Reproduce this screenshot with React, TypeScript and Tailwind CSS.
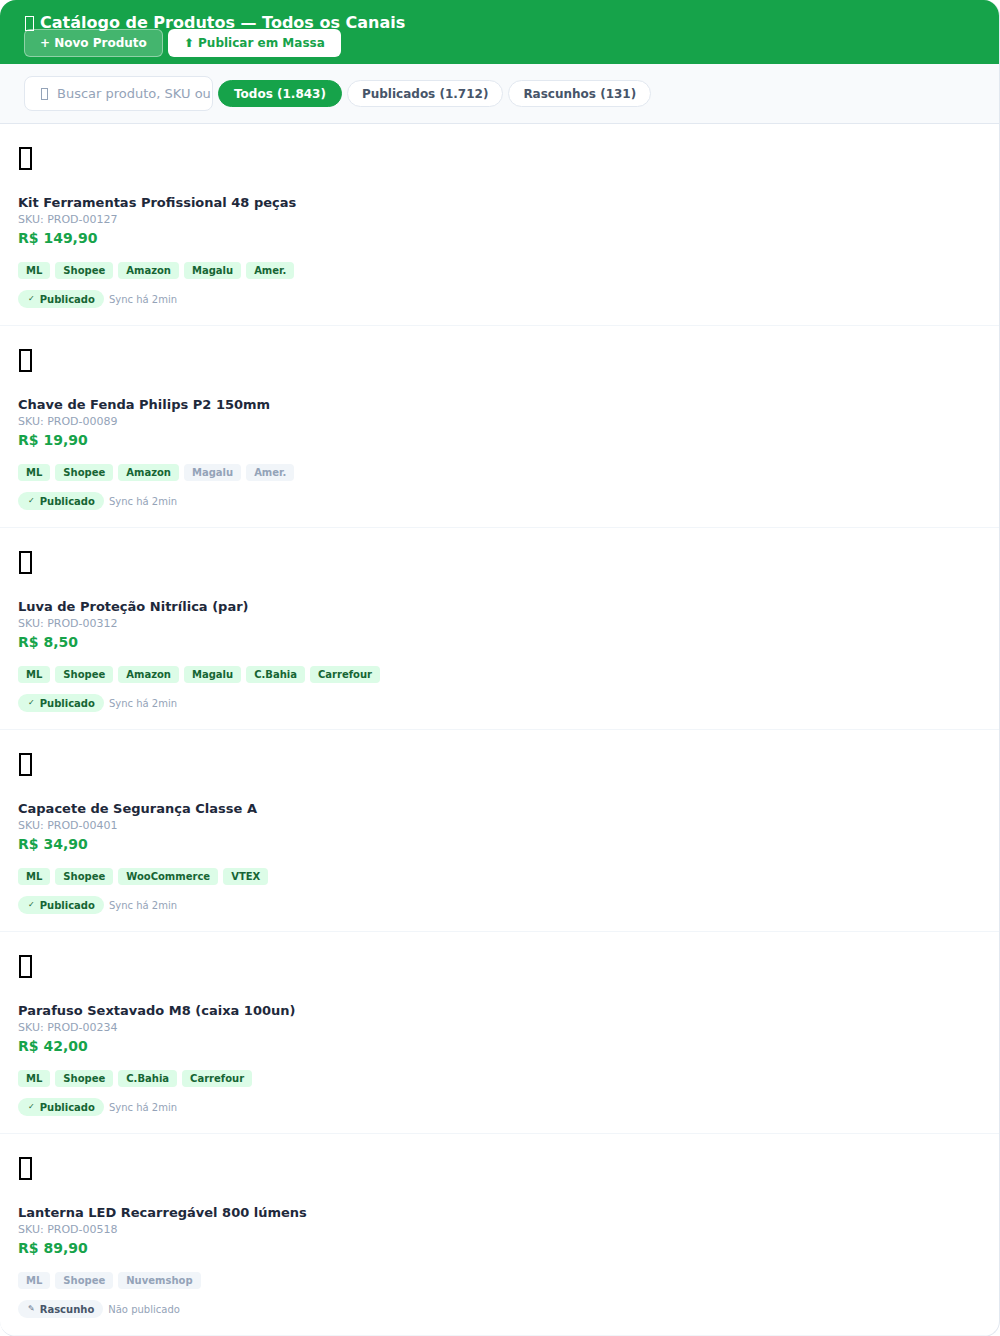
import React from 'react';

type Channel = { name: string; on: boolean };

interface Product {
  emoji: string;
  name: string;
  sku: string;
  price: string;
  channels: Channel[];
  draft?: boolean;
}

const ch = (names: string[], off: string[] = []): Channel[] =>
  names.map((name) => ({ name, on: !off.includes(name) }));

const PRODUCTS: Product[] = [
  { emoji: '🧰', name: 'Kit Ferramentas Profissional 48 peças', sku: 'PROD-00127', price: 'R$ 149,90', channels: ch(['ML', 'Shopee', 'Amazon', 'Magalu', 'Amer.']) },
  { emoji: '🪛', name: 'Chave de Fenda Philips P2 150mm', sku: 'PROD-00089', price: 'R$ 19,90', channels: ch(['ML', 'Shopee', 'Amazon', 'Magalu', 'Amer.'], ['Magalu', 'Amer.']) },
  { emoji: '🧤', name: 'Luva de Proteção Nitrílica (par)', sku: 'PROD-00312', price: 'R$ 8,50', channels: ch(['ML', 'Shopee', 'Amazon', 'Magalu', 'C.Bahia', 'Carrefour']) },
  { emoji: '⛑️', name: 'Capacete de Segurança Classe A', sku: 'PROD-00401', price: 'R$ 34,90', channels: ch(['ML', 'Shopee', 'WooCommerce', 'VTEX']) },
  { emoji: '🔩', name: 'Parafuso Sextavado M8 (caixa 100un)', sku: 'PROD-00234', price: 'R$ 42,00', channels: ch(['ML', 'Shopee', 'C.Bahia', 'Carrefour']) },
  { emoji: '🔦', name: 'Lanterna LED Recarregável 800 lúmens', sku: 'PROD-00518', price: 'R$ 89,90', channels: ch(['ML', 'Shopee', 'Nuvemshop'], ['ML', 'Shopee', 'Nuvemshop']), draft: true },
];

// the emoji show up as empty "missing glyph" boxes in the reference
const GlyphBox: React.FC<{ label: string; className: string }> = ({ label, className }) => (
  <span role="img" aria-label={label} className={`inline-block shrink-0 ${className}`} />
);

const ProductRow: React.FC<{ p: Product }> = ({ p }) => (
  <div className="px-[18px] pt-[18px] pb-[17px] border-b border-[#f1f5f9]">
    <div className="h-[36px] mb-[16px] pt-[5px]">
      <GlyphBox label={p.emoji} className="w-[13px] h-[23px] border-2 border-black ml-[1px]" />
    </div>
    <div className="text-[13px] leading-[18px] font-bold text-[#1e293b]">{p.name}</div>
    <div className="text-[11px] leading-[16px] text-[#94a3b8]">SKU: {p.sku}</div>
    <div className="text-[14px] leading-[20px] font-bold text-[#16a34a]">{p.price}</div>

    {/* channel tags */}
    <div className="flex gap-[5px] mt-[14px]">
      {p.channels.map((c) => (
        <span
          key={c.name}
          className={`h-[17px] px-2 rounded flex items-center text-[10px] font-bold ${
            c.on ? 'bg-[#dcfce7] text-[#166534]' : 'bg-[#f1f5f9] text-[#94a3b8]'
          }`}
        >
          {c.name}
        </span>
      ))}
    </div>

    {/* status */}
    <div className="flex items-center gap-[5px] mt-[11px]">
      {p.draft ? (
        <span className="h-[18px] pl-[10px] pr-[9px] rounded-full bg-[#f1f5f9] text-[#475569] text-[10px] font-bold flex items-center gap-[5px]">
          <span className="text-[8px] text-[#64748b]">✎</span>Rascunho
        </span>
      ) : (
        <span className="h-[18px] pl-[10px] pr-[9px] rounded-full bg-[#dcfce7] text-[#166534] text-[10px] font-bold flex items-center gap-[5px]">
          <span className="text-[8px]">✓</span>Publicado
        </span>
      )}
      <span className="text-[10px] text-[#94a3b8]">{p.draft ? 'Não publicado' : 'Sync há 2min'}</span>
    </div>
  </div>
);

const App: React.FC = () => {
  return (
    <div className="bg-white font-['DejaVu_Sans',sans-serif]">
      <div className="w-[1000px] border-r border-b border-[#e2e8f0] rounded-2xl overflow-hidden bg-white">
        {/* Header */}
        <div className="h-[64px] bg-[#16a34a] px-6 pt-[15px]">
          <h1 className="text-base leading-[16px] font-bold text-white flex items-center gap-[6px]">
            <GlyphBox label="📦" className="w-[9px] h-[15px] border border-white ml-[1px]" />
            Catálogo de Produtos — Todos os Canais
          </h1>
          <div className="flex gap-[5px] -mt-[2px]">
            <button className="h-[28px] px-[15px] rounded-md bg-white/20 border border-white/40 text-white text-[12px] font-bold">
              + Novo Produto
            </button>
            <button className="h-[28px] px-[16px] rounded-md bg-white text-[#16a34a] text-[12px] font-bold">
              ⬆ Publicar em Massa
            </button>
          </div>
        </div>

        {/* Filter bar */}
        <div className="flex items-center gap-[5px] px-6 py-3 bg-[#f8fafc] border-b border-[#e2e8f0]">
          <label className="w-[189px] h-[35px] rounded-lg border border-[#e2e8f0] bg-white flex items-center gap-[9px] pl-[16px] overflow-hidden">
            <GlyphBox label="🔍" className="w-[7px] h-[12px] border border-[#94a3b8]" />
            <input
              placeholder="Buscar produto, SKU ou nome..."
              className="flex-1 min-w-0 bg-transparent outline-none text-[13px] text-[#334155] placeholder:text-[#94a3b8] font-['DejaVu_Sans',sans-serif]"
            />
          </label>
          <button className="h-[27px] px-[15px] rounded-full bg-[#16a34a] border border-[#16a34a] text-white text-[12px] font-bold">
            Todos (1.843)
          </button>
          <button className="h-[27px] px-[14px] rounded-full bg-white border border-[#e2e8f0] text-[#475569] text-[12px] font-bold">
            Publicados (1.712)
          </button>
          <button className="h-[27px] px-[14px] rounded-full bg-white border border-[#e2e8f0] text-[#475569] text-[12px] font-bold">
            Rascunhos (131)
          </button>
        </div>

        {/* Product list */}
        <div>
          {PRODUCTS.map((p) => (
            <ProductRow key={p.sku} p={p} />
          ))}
        </div>
      </div>
    </div>
  );
};

export default App;
